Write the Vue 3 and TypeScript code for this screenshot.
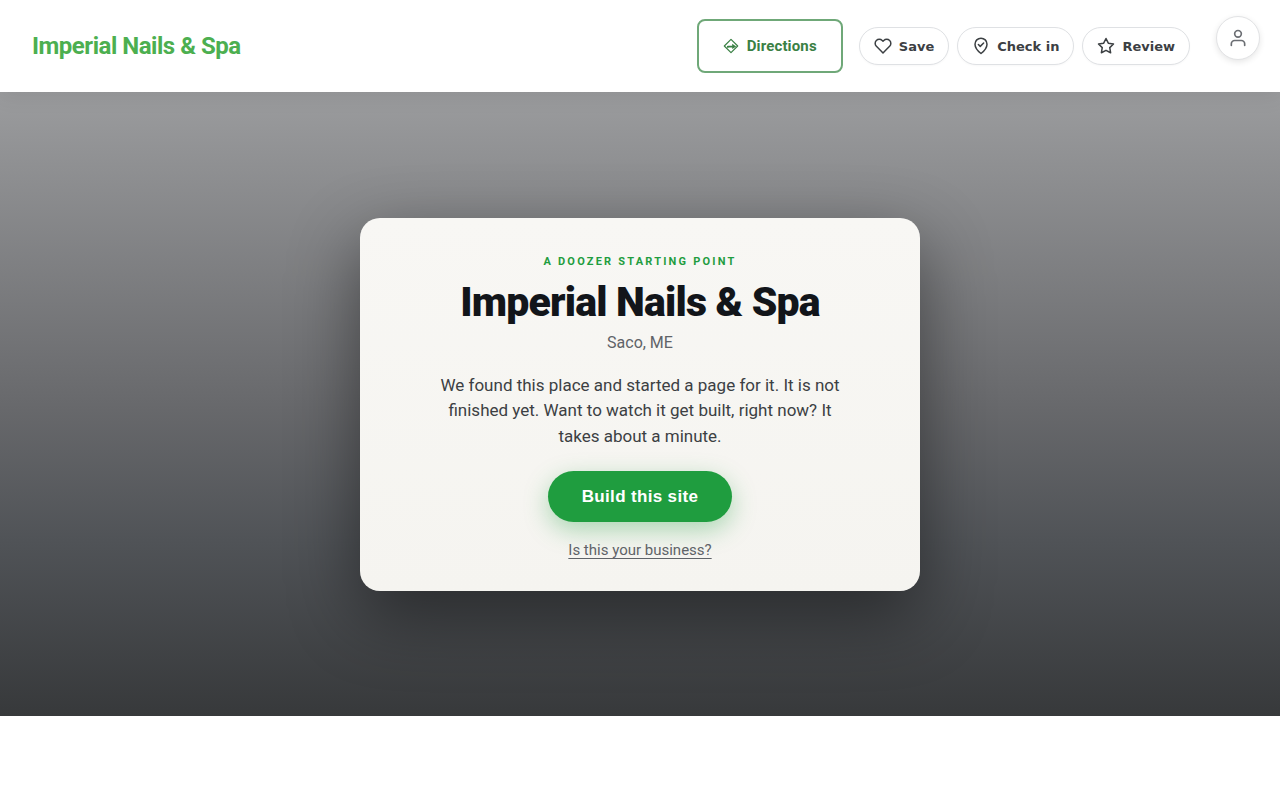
<script setup lang="ts">
interface Action {
  label: string
  paths: string[]
}

const actions: Action[] = [
  {
    label: 'Save',
    paths: [
      'M20.84 4.61a5.5 5.5 0 0 0-7.78 0L12 5.67l-1.06-1.06a5.5 5.5 0 0 0-7.78 7.78l1.06 1.06L12 21.23l7.78-7.78 1.06-1.06a5.5 5.5 0 0 0 0-7.78z',
    ],
  },
  {
    label: 'Check in',
    paths: ['M12 22s8-6.5 8-12.5a8 8 0 0 0-16 0C4 15.5 12 22 12 22z', 'M8.5 10l2.5 2.5 4.5-4.5'],
  },
  {
    label: 'Review',
    paths: ['M12 2l3.09 6.26L22 9.27l-5 4.87 1.18 6.88L12 17.77l-6.18 3.25L7 14.14 2 9.27l6.91-1.01L12 2z'],
  },
]
</script>

<template>
  <div class="page">
    <header class="topbar">
      <a class="brand" href="#">Imperial Nails &amp; Spa</a>
      <nav class="actions" aria-label="Business actions">
        <a class="directions" href="#">
          <svg viewBox="0 0 16 16" width="16" height="16" fill="none" stroke="currentColor" stroke-linejoin="round" aria-hidden="true">
            <path d="M8 1.3L14.7 8 8 14.7 1.3 8z" stroke-width="1.2" />
            <path d="M4.8 9.8V8.6h5" stroke-width="1.7" />
            <path d="M9.2 5.8L13.2 8.5 9.2 11z" fill="currentColor" stroke="none" />
          </svg>
          <span>Directions</span>
        </a>
        <div class="pills">
          <button v-for="action in actions" :key="action.label" class="pill" type="button">
            <svg viewBox="0 0 24 24" width="18" height="18" fill="none" stroke="currentColor" stroke-width="2" stroke-linecap="round" stroke-linejoin="round" aria-hidden="true">
              <path v-for="d in action.paths" :key="d" :d="d" />
            </svg>
            <span>{{ action.label }}</span>
          </button>
        </div>
      </nav>
    </header>

    <button class="account" type="button" aria-label="Account">
      <svg viewBox="0 0 24 24" width="20" height="20" fill="none" stroke="currentColor" stroke-width="2" stroke-linecap="round" stroke-linejoin="round" aria-hidden="true">
        <path d="M20 21v-2a4 4 0 0 0-4-4H8a4 4 0 0 0-4 4v2" />
        <circle cx="12" cy="7" r="4" />
      </svg>
    </button>

    <main class="hero">
      <section class="card">
        <p class="eyebrow">A Doozer starting point</p>
        <h1>Imperial Nails &amp; Spa</h1>
        <p class="place">Saco, ME</p>
        <p class="intro">
          We found this place and started a page for it. It is not finished yet. Want to watch it get built, right now?
          It takes about a minute.
        </p>
        <button class="build" type="button">Build this site</button>
        <a class="claim" href="#">Is this your business?</a>
      </section>
    </main>
  </div>
</template>

<style>
body {
  margin: 0;
  background: #fff;
}
</style>

<style scoped>
.page {
  position: relative;
  font-family: Roboto, "Liberation Sans", sans-serif;
}

.topbar {
  position: relative;
  z-index: 1;
  display: flex;
  align-items: center;
  justify-content: space-between;
  box-sizing: border-box;
  min-height: 92px;
  padding: 16px 90px 16px 32px;
  background: #fff;
  box-shadow: 0 4px 20px rgba(0, 0, 0, 0.08);
}

.brand {
  color: #4caf50;
  font-size: 24px;
  font-weight: 700;
  letter-spacing: -0.02em;
  line-height: 32px;
  text-decoration: none;
}

.actions {
  display: flex;
  align-items: center;
  gap: 16px;
}

.directions {
  display: flex;
  align-items: center;
  gap: 8px;
  box-sizing: border-box;
  height: 54px;
  padding: 0 24px;
  border: 2px solid #6fa878;
  border-radius: 8px;
  color: #3a8044;
  font-size: 15px;
  font-weight: 700;
  letter-spacing: 0.01em;
  line-height: 20px;
  text-decoration: none;
}

.pills {
  display: flex;
  gap: 8px;
}

.pill {
  display: flex;
  align-items: center;
  gap: 7px;
  height: 38px;
  padding: 0 14px;
  border: 1px solid #dfe1e4;
  border-radius: 19px;
  background: #fff;
  box-shadow: 0 1px 2px rgba(0, 0, 0, 0.03);
  color: #3c4043;
  font: 700 13px/19px "DejaVu Sans", sans-serif;
}

.account {
  position: absolute;
  z-index: 2;
  top: 16px;
  right: 20px;
  display: flex;
  align-items: center;
  justify-content: center;
  width: 44px;
  height: 44px;
  padding: 0;
  border: 1px solid #e2e3e5;
  border-radius: 50%;
  background: #fff;
  box-shadow: 0 2px 6px rgba(0, 0, 0, 0.1);
  color: #6b6e73;
}

.hero {
  display: flex;
  align-items: center;
  justify-content: center;
  box-sizing: border-box;
  min-height: 78vh;
  padding: 33px 20px 32px;
  background: linear-gradient(#9b9c9e 0%, #68696c 50%, #505357 72%, #37393b 100%);
}

.card {
  display: flex;
  flex-direction: column;
  align-items: center;
  box-sizing: border-box;
  width: 100%;
  max-width: 560px;
  padding: 37px 40px 31px;
  border-radius: 20px;
  background: linear-gradient(#f8f7f4, #f5f4f0);
  box-shadow: 0 24px 70px rgba(0, 0, 0, 0.45);
  text-align: center;
}

.eyebrow {
  margin: 0 0 9px;
  color: #1f9d3f;
  font-size: 11px;
  font-weight: 700;
  letter-spacing: 0.2em;
  line-height: 14px;
  text-transform: uppercase;
}

h1 {
  margin: 0;
  color: #12151a;
  font-size: 41px;
  font-weight: 900;
  letter-spacing: -0.02em;
  line-height: 48px;
}

.place {
  margin: 6px 0 19px;
  color: #5f6368;
  font-size: 16px;
  line-height: 22px;
}

.intro {
  max-width: 400px;
  margin: 0 0 22px;
  color: #3c4043;
  font-size: 17px;
  line-height: 1.5;
}

.build {
  height: 51px;
  margin-bottom: 18px;
  padding: 0 34px;
  border: 0;
  border-radius: 26px;
  background: #1f9d3f;
  box-shadow: 0 8px 24px rgba(31, 157, 63, 0.35);
  color: #fff;
  font: 700 17px/20px "Liberation Sans", Arial, sans-serif;
  letter-spacing: 0.02em;
}

.claim {
  color: #5f6368;
  font-size: 15px;
  line-height: 20px;
  text-decoration: underline;
  text-underline-offset: 3px;
}
</style>
